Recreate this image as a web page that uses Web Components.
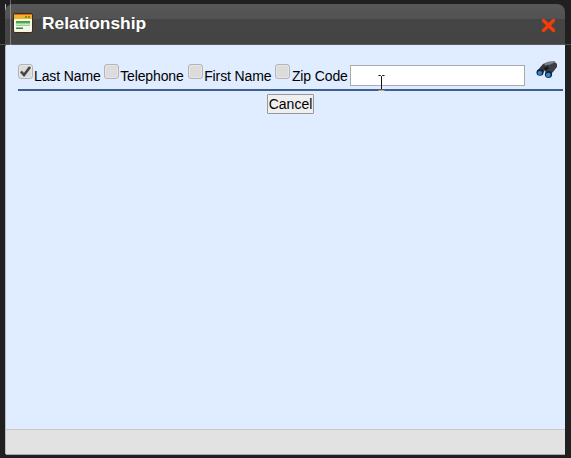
<!DOCTYPE html>
<html><head><meta charset="utf-8">
<style>html,body{margin:0;padding:0;background:#202020;overflow:hidden}</style>
</head><body>
<rel-dialog>
<span slot="title">Relationship</span>
<search-row></search-row>
</rel-dialog>
<script>
function def(name, html){
  customElements.define(name, class extends HTMLElement{
    constructor(){super();this.attachShadow({mode:'open'}).innerHTML=html;}
  });
}
def('rel-check', `<style>
:host{display:inline-flex;align-items:flex-start;font:14px "Liberation Sans",Arial,sans-serif;letter-spacing:-.12px;color:#000}
input{appearance:none;-webkit-appearance:none;box-sizing:border-box;width:15px;height:15px;margin:0;border:1px solid #b4b4b4;border-radius:3px;background:#dcdcdc;display:block;box-shadow:inset 0 0 0 1px #e6e6e6}
svg{position:absolute;left:0;top:0;width:15px;height:15px;display:none}
:host([checked]) svg{display:block}
.w{position:relative;display:block;width:16.5px;height:15px;flex:none}
:host([checked]) .w{width:16px}
.t{margin-top:4px;line-height:16px;white-space:nowrap}
</style><span class="w"><input type="checkbox" disabled><svg viewBox="0 0 15 15"><path d="M3 7.500 L6 11 L12 3" fill="none" stroke="#444" stroke-width="2.600"/></svg></span><span class="t"><slot></slot></span>`);

def('search-row', `<style>
:host{display:block;font:14px "Liberation Sans",Arial,sans-serif;color:#000;padding:19px 2px 0 12px}
.row{display:flex;align-items:flex-start;height:25px;border-bottom:2px solid #3f5f8f;position:relative}
rel-check+rel-check{margin-left:4px}
rel-check:nth-of-type(2){margin-left:3px}
input{box-sizing:border-box;width:175px;height:21px;margin:1px 0 0 2.500px;border:1px solid #aaa;background:#fff;padding:0 2px;flex:none}
svg.bin{margin:-4px 0 0 11px;flex:none}
.c{display:flex;justify-content:center;padding-top:3px}
button{box-sizing:border-box;width:47px;height:20px;padding:0;border:1px solid #999;background:#efefef;font:14px "Liberation Sans",Arial,sans-serif;color:#000;border-radius:1px}
</style>
<div class="row">
<rel-check checked>Last Name</rel-check><rel-check>Telephone</rel-check><rel-check>First Name</rel-check><rel-check>Zip Code</rel-check>
<input type="text">
<svg class="bin" width="22" height="19" viewBox="0 0 22 19">
<path d="M1 11 L7 4 L12 2 L14 5 L10 9 L7 13 L2 14 Z" fill="#33363d"/>
<path d="M9 10 L13 5 L18 1 L21 4 L21 7 L17 12 L15 14 L10 14 Z" fill="#3c3f47"/>
<path d="M8 3.500 L13 1.500 L18 1 L19 2.500 L14 4.500 L9 5.500Z" fill="#7b7f88"/>
<path d="M8 8 L12 6.500 L13 8 L10 11 Z" fill="#14161a"/>
<ellipse cx="4" cy="12.500" rx="3.500" ry="3.200" fill="#1a1f28"/><ellipse cx="3.800" cy="13" rx="2.300" ry="2" fill="#2489ea"/>
<ellipse cx="12.500" cy="14.500" rx="3.600" ry="3.400" fill="#1a1f28"/><ellipse cx="12.300" cy="15" rx="2.400" ry="2.200" fill="#2489ea"/>
</svg>
</div>
<div class="c"><button>Cancel</button></div>`);

def('rel-dialog', `<style>
:host{display:block;width:571px;height:458px;box-sizing:border-box;background:#202020;padding:4px 6px 4px 6px;position:relative;overflow:hidden}
.box{height:100%;display:flex;flex-direction:column;box-shadow:-1px 0 0 #bbb,0 1px 0 #aaa}
header{height:41px;flex:none;box-sizing:border-box;margin-left:-1px;border-radius:8px 8px 0 0;background:linear-gradient(#575757 0,#525252 15px,#454545 15px,#444 100%);border-bottom:1px solid #2c2c2c;display:flex;align-items:center;padding:0 9px 0 8px;font:bold 17.35px "Liberation Sans",Arial,sans-serif;color:#fff;box-shadow:0 1px 0 #666}
header .ttl{margin-left:9px;flex:1;margin-top:-1px}
header svg{flex:none;margin-top:-2px}
header svg.x{margin-top:3px}
main{flex:1;background:#e0ecff;min-height:0}
footer{height:24px;flex:none;background:#e2e2e2;border-top:1px solid #c8c8c8}
.vl{position:absolute;left:10px;top:0;width:1px;height:45px;background:rgba(255,255,255,.32)}
.hl{position:absolute;left:0;right:0;top:44px;height:1px;background:rgba(255,255,255,.22)}
.cur{position:absolute;left:377px;top:75px}
</style>
<div class="box">
<header>
<svg width="20" height="20" viewBox="0 0 20 20"><rect x=".5" y=".5" width="19" height="19" rx="1.500" fill="#f6f6e8" stroke="#3f2a18"/><rect x="1" y="1" width="18" height="5" fill="#efb52a"/><rect x="1" y="1" width="18" height="1" fill="#d9661f"/><rect x="12" y="3" width="2" height="2" fill="#8a8a2a"/><rect x="15" y="3" width="2" height="2" fill="#8a8a2a"/><rect x="3" y="8" width="14" height="2.500" fill="#45a845"/><rect x="3" y="11.500" width="14" height="1.500" fill="#9ad49a"/><rect x="3" y="14.500" width="7" height="1.500" fill="#2e8b2e"/></svg>
<span class="ttl"><slot name="title"></slot></span>
<svg class="x" width="15" height="15" viewBox="0 0 15 15"><path d="M2.500 2.500 L12.500 12.500 M12.500 2.500 L2.500 12.500" stroke="#f63a0a" stroke-width="3.400" stroke-linecap="round"/></svg>
</header>
<main><slot></slot></main>
<footer></footer>
</div>
<div class="vl"></div><div class="hl"></div>
<svg class="cur" width="9" height="17" viewBox="0 0 9 17"><path d="M1.500 .5H3.500L4.500 1.500L5.500 .5H7.500M4.500 1.500V14" fill="none" stroke="#111"/><path d="M1.500 15.500H7.500" stroke="#d9a566"/></svg>`);
</script>
</body></html>
